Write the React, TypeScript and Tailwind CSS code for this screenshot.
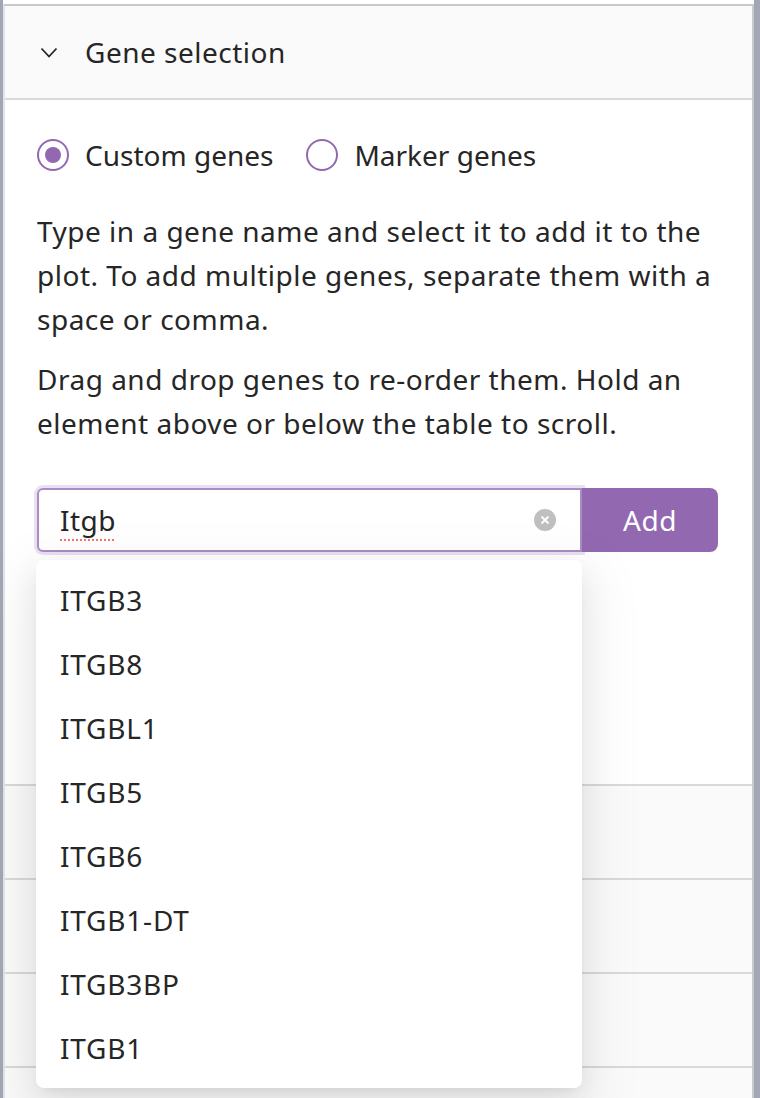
import React from "react";

const genes = ["ITGB3", "ITGB8", "ITGBL1", "ITGB5", "ITGB6", "ITGB1-DT", "ITGB3BP", "ITGB1"];

const Radio = ({ checked, label }: { checked?: boolean; label: string }) => (
  <label className="flex items-center gap-4 tracking-normal">
    <span className="flex h-8 w-8 items-center justify-center rounded-full border-2 border-[#9269b1] bg-white">
      {checked && <span className="h-4 w-4 rounded-full bg-[#9269b1]" />}
    </span>
    <span>{label}</span>
  </label>
);

const PanelHeader = ({ title, open }: { title?: string; open?: boolean }) => (
  <div className="flex h-[94px] items-center gap-[27px] border-b-2 border-[#d9d9d9] bg-[#fafafa] px-[35px]">
    {open && (
      <svg width="18" height="12" viewBox="0 0 18 12" fill="none">
        <polyline points="1.5,2.5 9,10.5 16.5,2.5" stroke="#262626" strokeWidth="1.8" />
      </svg>
    )}
    {title && <span>{title}</span>}
  </div>
);

export default function App() {
  return (
    <div
      className="flex h-[1098px] w-[760px] overflow-hidden bg-white text-[28px] tracking-[0.5px] text-[#262626]"
      style={{ fontFamily: '"Noto Sans", sans-serif' }}
    >
      <div className="w-[3px] bg-[#a3a7b5]" />
      <div className="relative flex-1 pt-[4px]">
        <div className="border-x-2 border-t-2 border-[#c9c9cc] border-l-[#e4e4e4]">
          <PanelHeader title="Gene selection" open />
          <div className="h-[686px] border-b-2 border-[#d9d9d9] bg-white px-[32px] pt-[33px] leading-[44px]">
            <div className="flex items-center gap-[33px]">
              <Radio checked label="Custom genes" />
              <Radio label="Marker genes" />
            </div>
            <p className="mt-[32px]">
              Type in a gene name and select it to add it to the plot. To add multiple genes, separate them with a
              space or comma.
            </p>
            <p className="mt-[16px]">
              Drag and drop genes to re-order them. Hold an element above or below the table to scroll.
            </p>
            <div className="relative mt-[43px] flex h-[64px] w-[681px]">
              <div className="flex flex-1 items-center rounded-l-[6px] border-2 border-[#a98cc7] bg-white pl-[21px] pr-[24px] shadow-[0_0_0_3px_rgba(146,105,177,0.2)]">
                <span className="flex-1 underline decoration-[#f87171] decoration-dotted decoration-2 underline-offset-[8px]">
                  Itgb
                </span>
                <span className="flex h-[22px] w-[22px] items-center justify-center rounded-full bg-[#bfbfbf]">
                  <svg width="10" height="10" viewBox="0 0 10 10">
                    <path d="M1.5 1.5 L8.5 8.5 M8.5 1.5 L1.5 8.5" stroke="white" strokeWidth="1.8" />
                  </svg>
                </span>
              </div>
              <button className="w-[136px] rounded-r-[8px] bg-[#9269b1] text-white">Add</button>
              <div className="absolute left-[-1px] top-[72px] z-10 w-[546px] rounded-[8px] bg-white py-[8px] shadow-[0_12px_32px_0_rgba(0,0,0,0.08),0_6px_12px_-8px_rgba(0,0,0,0.12),0_18px_56px_16px_rgba(0,0,0,0.05)]">
                {genes.map((g) => (
                  <div key={g} className="flex h-[64px] items-center px-[24px] tracking-[0.8px]">
                    {g}
                  </div>
                ))}
              </div>
            </div>
          </div>
          <PanelHeader />
          <PanelHeader />
          <PanelHeader />
          <PanelHeader />
        </div>
      </div>
      <div className="w-[6px] bg-[#a3a7b5]" />
    </div>
  );
}
